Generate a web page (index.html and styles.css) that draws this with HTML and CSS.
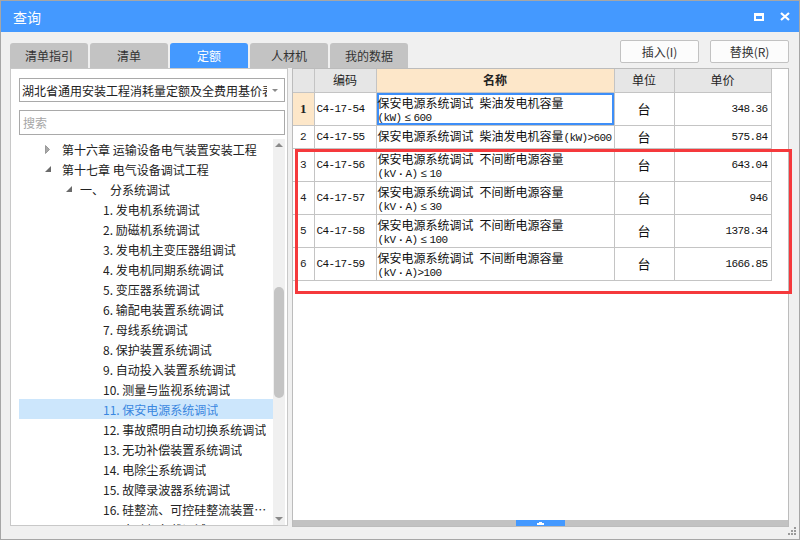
FILE: index.html
```html
<!DOCTYPE html>
<html lang="zh">
<head>
<meta charset="utf-8">
<title>查询</title>
<link rel="stylesheet" href="styles.css">
</head>
<body>
<div class="window">
  <div class="titlebar">
    <span class="title">查询</span>
    <div class="wctrls">
      <svg width="10" height="8" viewBox="0 0 10 8"><path d="M0 0H10V8H0Z M2 3H8V6H2Z" fill="#fff" fill-rule="evenodd"/></svg>
      <svg width="10" height="9" viewBox="0 0 10 9"><path d="M1 1L9 8M9 1L1 8" stroke="#fff" stroke-width="2.2"/></svg>
    </div>
  </div>
  <div class="main">
    <div class="toolbar">
      <div class="tabs">
        <div class="tab">清单指引</div>
        <div class="tab">清单</div>
        <div class="tab active">定额</div>
        <div class="tab">人材机</div>
        <div class="tab">我的数据</div>
      </div>
      <div class="actions">
        <button class="btn">插入(I)</button>
        <button class="btn">替换(R)</button>
      </div>
    </div>
    <div class="content">
      <div class="leftpanel">
        <div class="select">
          <span class="select-text">湖北省通用安装工程消耗量定额及全费用基价表</span>
          <svg class="caret" width="6" height="3" viewBox="0 0 6 3"><path d="M0 0H6L3 3Z" fill="#8a8a8a"/></svg>
        </div>
        <div class="search">搜索</div>
        <div class="treewrap">
          <div class="tree">
            <div class="row lvl0"><span class="exp"><svg width="5" height="9" viewBox="0 0 5 9"><path d="M0.5 0.5L4.5 4.5L0.5 8.5Z" fill="#a8a8a8" stroke="#8c8c8c" stroke-width="0.8"/></svg></span><span class="txt">第十六章 运输设备电气装置安装工程</span></div>
            <div class="row lvl0"><span class="exp"><svg width="6" height="6" viewBox="0 0 6 6"><path d="M6 0V6H0Z" fill="#6a6a6a"/></svg></span><span class="txt">第十七章 电气设备调试工程</span></div>
            <div class="row lvl1"><span class="exp"><svg width="6" height="6" viewBox="0 0 6 6"><path d="M6 0V6H0Z" fill="#6a6a6a"/></svg></span><span class="txt">一、<span class="gap"></span>分系统调试</span></div>
            <div class="row lvl2"><span class="txt">1. 发电机系统调试</span></div>
            <div class="row lvl2"><span class="txt">2. 励磁机系统调试</span></div>
            <div class="row lvl2"><span class="txt">3. 发电机主变压器组调试</span></div>
            <div class="row lvl2"><span class="txt">4. 发电机同期系统调试</span></div>
            <div class="row lvl2"><span class="txt">5. 变压器系统调试</span></div>
            <div class="row lvl2"><span class="txt">6. 输配电装置系统调试</span></div>
            <div class="row lvl2"><span class="txt">7. 母线系统调试</span></div>
            <div class="row lvl2"><span class="txt">8. 保护装置系统调试</span></div>
            <div class="row lvl2"><span class="txt">9. 自动投入装置系统调试</span></div>
            <div class="row lvl2"><span class="txt">10. 测量与监视系统调试</span></div>
            <div class="row lvl2 selected"><span class="txt">11. 保安电源系统调试</span></div>
            <div class="row lvl2"><span class="txt">12. 事故照明自动切换系统调试</span></div>
            <div class="row lvl2"><span class="txt">13. 无功补偿装置系统调试</span></div>
            <div class="row lvl2"><span class="txt">14. 电除尘系统调试</span></div>
            <div class="row lvl2"><span class="txt">15. 故障录波器系统调试</span></div>
            <div class="row lvl2"><span class="txt">16. 硅整流、可控硅整流装置系统调试</span></div>
            <div class="row lvl2"><span class="txt">17. 电动机负载调试</span></div>
          </div>
          <div class="vscroll">
            <svg class="arrow" width="12" height="12" viewBox="0 0 12 12"><path d="M2 8H10L6 4Z" fill="#8a8a8a"/></svg>
            <div class="vthumb"></div>
            <div class="spacer"></div>
            <svg class="arrow" width="12" height="12" viewBox="0 0 12 12"><path d="M2 4H10L6 8Z" fill="#8a8a8a"/></svg>
          </div>
        </div>
      </div>
      <div class="tablepanel">
        <div class="tablearea">
          <table class="grid">
            <colgroup>
              <col class="c-rh"><col class="c-code"><col class="c-name"><col class="c-unit"><col class="c-price">
            </colgroup>
            <thead>
              <tr class="hdr">
                <th class="rh"></th>
                <th>编码</th>
                <th class="hl">名称</th>
                <th>单位</th>
                <th>单价</th>
              </tr>
            </thead>
            <tbody>
              <tr class="tall">
                <td class="rh sel">1</td>
                <td class="code">C4-17-54</td>
                <td class="name focus"><div class="nm">保安电源系统调试<span class="en"> </span>柴油发电机容量<br><span class="en">(kW)<span class="sym">≤</span>600</span></div></td>
                <td class="unit">台</td>
                <td class="price">348.36</td>
              </tr>
              <tr class="short">
                <td class="rh">2</td>
                <td class="code">C4-17-55</td>
                <td class="name"><div class="nm">保安电源系统调试<span class="en"> </span>柴油发电机容量<span class="en">(kW)&gt;600</span></div></td>
                <td class="unit">台</td>
                <td class="price">575.84</td>
              </tr>
              <tr class="tall">
                <td class="rh">3</td>
                <td class="code">C4-17-56</td>
                <td class="name"><div class="nm">保安电源系统调试<span class="en"> </span>不间断电源容量<br><span class="en">(kV<span class="dot">·</span>A)<span class="sym">≤</span>10</span></div></td>
                <td class="unit">台</td>
                <td class="price">643.04</td>
              </tr>
              <tr class="tall">
                <td class="rh">4</td>
                <td class="code">C4-17-57</td>
                <td class="name"><div class="nm">保安电源系统调试<span class="en"> </span>不间断电源容量<br><span class="en">(kV<span class="dot">·</span>A)<span class="sym">≤</span>30</span></div></td>
                <td class="unit">台</td>
                <td class="price">946</td>
              </tr>
              <tr class="tall">
                <td class="rh">5</td>
                <td class="code">C4-17-58</td>
                <td class="name"><div class="nm">保安电源系统调试<span class="en"> </span>不间断电源容量<br><span class="en">(kV<span class="dot">·</span>A)<span class="sym">≤</span>100</span></div></td>
                <td class="unit">台</td>
                <td class="price">1378.34</td>
              </tr>
              <tr class="tall">
                <td class="rh">6</td>
                <td class="code">C4-17-59</td>
                <td class="name"><div class="nm">保安电源系统调试<span class="en"> </span>不间断电源容量<br><span class="en">(kV<span class="dot">·</span>A)&gt;100</span></div></td>
                <td class="unit">台</td>
                <td class="price">1666.85</td>
              </tr>
            </tbody>
          </table>
        </div>
        <div class="hscroll"><div class="hthumb"><svg width="7" height="3" viewBox="0 0 7 3"><path d="M2 0H5V1H7V3H0V1H2Z" fill="#fff"/></svg></div></div>
        <div class="redbox"></div>
      </div>
    </div>
  </div>
  <svg class="grip" width="9" height="9" viewBox="0 0 9 9">
    <rect x="6" y="0" width="2" height="2" fill="#9a9a9a"/>
    <rect x="3" y="3" width="2" height="2" fill="#9a9a9a"/>
    <rect x="6" y="3" width="2" height="2" fill="#9a9a9a"/>
    <rect x="0" y="6" width="2" height="2" fill="#9a9a9a"/>
    <rect x="3" y="6" width="2" height="2" fill="#9a9a9a"/>
    <rect x="6" y="6" width="2" height="2" fill="#9a9a9a"/>
  </svg>
</div>
</body>
</html>
```

FILE: styles.css
```css
* { box-sizing: border-box; margin: 0; padding: 0; }
html, body { width: 800px; height: 540px; overflow: hidden; }
body {
  font-family: "Noto Sans CJK SC", "Microsoft YaHei", sans-serif;
  font-size: 12px;
  color: #222;
  background: #f0f0f0;
}
.window {
  width: 800px;
  height: 540px;
  border: 1px solid #a6a6a6;
  background: #f0f0f0;
  display: flex;
  flex-direction: column;
  position: relative;
}
.titlebar {
  height: 31px;
  flex: none;
  background: #4499ff;
  color: #fff;
  display: flex;
  align-items: center;
  justify-content: space-between;
  padding: 0 9px 0 12px;
}
.title { font-size: 14px; line-height: 1; }
.wctrls { display: flex; align-items: center; gap: 16px; }
.wctrls svg { display: block; }

.main {
  flex: 1;
  display: flex;
  flex-direction: column;
  padding: 8px 10px 12px 9px;
  min-height: 0;
}
.toolbar {
  height: 28px;
  flex: none;
  display: flex;
  justify-content: space-between;
}
.tabs { display: flex; gap: 2px; align-self: flex-end; }
.tab {
  width: 78px;
  height: 25px;
  background: #c3c3c3;
  border-radius: 3px 3px 0 0;
  color: #333;
  display: flex;
  align-items: center;
  justify-content: center;
}
.tab.active { background: #4499ff; color: #fff; }
.actions { display: flex; gap: 11px; align-self: flex-start; }
.btn {
  width: 79px;
  height: 23px;
  border: 1px solid #c2c2c2;
  border-radius: 2px;
  background: #fcfcfc;
  font: inherit;
  color: #333;
}

.content { flex: 1; display: flex; gap: 4px; min-height: 0; }

.leftpanel {
  width: 278px;
  height: 458px;
  flex: none;
  background: #fff;
  border: 1px solid #c8c8c8;
  padding: 9px 2px 0 8px;
  display: flex;
  flex-direction: column;
}
.select {
  height: 24px;
  flex: none;
  border: 1px solid #a9a9a9;
  background: #fff;
  display: flex;
  align-items: center;
  padding-left: 2px;
  overflow: hidden;
}
.select-text { flex: 1; white-space: nowrap; overflow: hidden; color: #222; }
.caret { flex: none; margin: 0 6px 0 5px; }
.search {
  margin-top: 8px;
  height: 25px;
  flex: none;
  border: 1px solid #a9a9a9;
  color: #a6a6a6;
  display: flex;
  align-items: center;
  padding-left: 3px;
}
.treewrap { margin-top: 4px; flex: 1; display: flex; min-height: 0; overflow: hidden; }
.tree { flex: 1; overflow: hidden; min-width: 0; }
.row {
  height: 20px;
  display: flex;
  align-items: center;
  white-space: nowrap;
  padding-right: 6px;
  color: #222;
}
.row .txt { overflow: hidden; text-overflow: ellipsis; }
.lvl0 { padding-left: 26px; }
.lvl0 .exp { width: 17px; }
.lvl1 { padding-left: 47px; }
.lvl1 .exp { width: 14px; }
.lvl2 { padding-left: 84px; }
.exp { flex: none; display: flex; align-items: center; }
.exp svg { display: block; }
.gap { display: inline-block; width: 6px; }
.row.selected { background: #cce6fc; color: #3a87e0; }

.vscroll {
  width: 12px;
  flex: none;
  background: #f0f0f0;
  display: flex;
  flex-direction: column;
  align-items: center;
}
.vscroll .arrow { display: block; flex: none; }
.vthumb {
  margin-top: 136px;
  width: 10px;
  height: 111px;
  background: #c4c4c4;
  border-radius: 5px;
  flex: none;
}
.spacer { flex: 1; }

.tablepanel {
  flex: 1;
  background: #fff;
  border: 1px solid #bcbcbc;
  display: flex;
  flex-direction: column;
  position: relative;
  min-width: 0;
}
.tablearea { flex: 1; overflow: hidden; }
.grid {
  border-collapse: collapse;
  table-layout: fixed;
  width: 478px;
}
.c-rh { width: 21px; }
.c-code { width: 62px; }
.c-name { width: 238px; }
.c-unit { width: 60px; }
.c-price { width: 97px; }
.grid th, .grid td {
  border: 1px solid #c4c4c4;
  overflow: hidden;
  white-space: nowrap;
  padding: 0;
  line-height: 14px;
}
.grid tr > :first-child { border-left: none; }
.grid thead th { border-top: none; }
.hdr { height: 23px; }
.hdr th {
  background: #e6e6e6;
  font-weight: normal;
  color: #222;
  text-align: center;
  vertical-align: middle;
}
.hdr th.hl { background: #fde7c9; font-weight: bold; }
.tall { height: 33px; }
.short { height: 23px; }
.grid td.rh {
  text-align: center;
  font-family: "Liberation Mono", monospace;
  font-size: 11px;
  color: #222;
  vertical-align: middle;
}
.grid td.rh.sel { background: #fde7c9; font-weight: bold; font-family: "Liberation Serif", serif; font-size: 13px; }
.grid td.code {
  font-family: "Liberation Mono", monospace;
  font-size: 11px;
  letter-spacing: -0.6px;
  padding-left: 2px;
  vertical-align: middle;
  color: #111;
}
.grid td.name {
  vertical-align: top;
  color: #111;
}
.nm {
  padding: 3px 1px 0 1px;
  line-height: 13px;
  overflow: hidden;
  white-space: nowrap;
}
.tall .nm { height: 31px; }
.short .nm { height: 21px; }
.grid td.name.focus { box-shadow: inset 0 0 0 2px #3d8ef8; }
.en {
  font-family: "Liberation Mono", monospace;
  font-size: 11px;
  letter-spacing: -0.6px;
  line-height: 0;
}
.sym { padding: 0 3px; }
.dot { padding: 0 2px; font-weight: bold; }
.grid td.unit { text-align: center; vertical-align: middle; font-size: 13px; color: #111; }
.grid td.price {
  text-align: right;
  padding-right: 3px;
  font-family: "Liberation Mono", monospace;
  font-size: 11px;
  letter-spacing: -0.6px;
  vertical-align: middle;
  color: #111;
}

.hscroll {
  height: 6px;
  flex: none;
  background: #c2c2c2;
  display: flex;
}
.hthumb {
  margin-left: 223px;
  width: 49px;
  height: 6px;
  background: #4499ff;
  display: flex;
  align-items: center;
  justify-content: center;
}
.hthumb svg { display: block; }

.redbox {
  position: absolute;
  left: 2px;
  top: 80px;
  width: 497px;
  height: 145px;
  border: 3px solid #f5393c;
  pointer-events: none;
}
.grip { position: absolute; right: 2px; bottom: 3px; display: block; }
```
